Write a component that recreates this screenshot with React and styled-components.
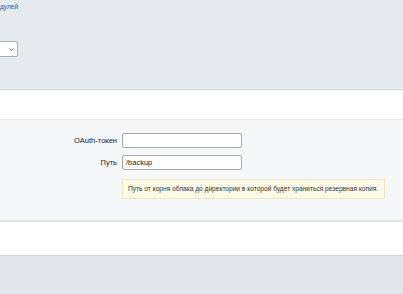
import styled, { createGlobalStyle } from "styled-components";

const Global = createGlobalStyle`
  html, body { margin: 0; padding: 0; }
  body {
    width: 403px;
    height: 294px;
    overflow: hidden;
    background: #e2e8ea;
    font-family: "Liberation Sans", Arial, sans-serif;
  }
`;

const Top = styled.div`
  height: 89px;
  background: #e5eaec;
  padding-top: 3px;
  box-sizing: border-box;
  border-bottom: 1px solid #f0f3f4;
`;

const Crumb = styled.a`
  display: block;
  font-size: 6.6px;
  line-height: 8px;
  color: #2067b0;
  text-decoration: none;
`;

const Select = styled.div`
  margin-top: 30px;
  margin-left: -2px;
  width: 20px;
  height: 16px;
  box-sizing: border-box;
  background: #fff;
  border: 1px solid #a8adb1;
  border-radius: 2px;
  display: flex;
  align-items: center;
  justify-content: flex-end;
  padding-right: 3px;
`;

const Band = styled.div`
  height: ${p => p.h}px;
  background: #fff;
  border-top: 1px solid ${p => p.line};
`;

const Panel = styled.div`
  background: #f5f7f8;
  border-top: 1px solid #e6ebed;
  border-bottom: 1px solid #dde6ea;
  padding: 13px 0 21px;
  display: grid;
  grid-template-columns: 117px 120px;
  column-gap: 5px;
  row-gap: 7px;
  align-items: center;
`;

const Label = styled.label`
  font-size: 7.5px;
  font-weight: normal;
  color: #222;
  text-align: right;
`;

const Input = styled.div`
  height: 15px;
  box-sizing: border-box;
  background: #fff;
  border: 1px solid #a4abb0;
  border-radius: 2px;
  padding: 0 3px;
  font-size: 7.5px;
  line-height: 13px;
  color: #0e1a2b;
`;

const Hint = styled.div`
  grid-column: 2;
  justify-self: start;
  white-space: nowrap;
  margin-top: 2px;
  width: 263px;
  height: 20px;
  box-sizing: border-box;
  background: #fdfbe6;
  border: 1px solid #ece6c4;
  padding: 0 5px;
  font-size: 6.6px;
  line-height: 18px;
  color: #333;
`;

const Foot = styled.div`
  height: 40px;
  border-top: 1px solid #cdd4d7;
  background: #e2e8ea;
`;

export default function App() {
  return (
    <>
      <Global />
      <Top>
        <Crumb href="#">дулей</Crumb>
        <Select>
          <svg width="5" height="3" viewBox="0 0 5 3">
            <path d="M0.5 0.5 L2.5 2.5 L4.5 0.5" fill="none" stroke="#555" strokeWidth="0.9" />
          </svg>
        </Select>
      </Top>
      <Band h={29} line="#cfd6d9" />
      <Panel>
        <Label>OAuth-токен</Label>
        <Input />
        <Label>Путь</Label>
        <Input>/backup</Input>
        <Hint>Путь от корня облака до директории в которой будет храниться резервная копия.</Hint>
      </Panel>
      <Band h={33} line="#dde6ea" />
      <Foot />
    </>
  );
}
